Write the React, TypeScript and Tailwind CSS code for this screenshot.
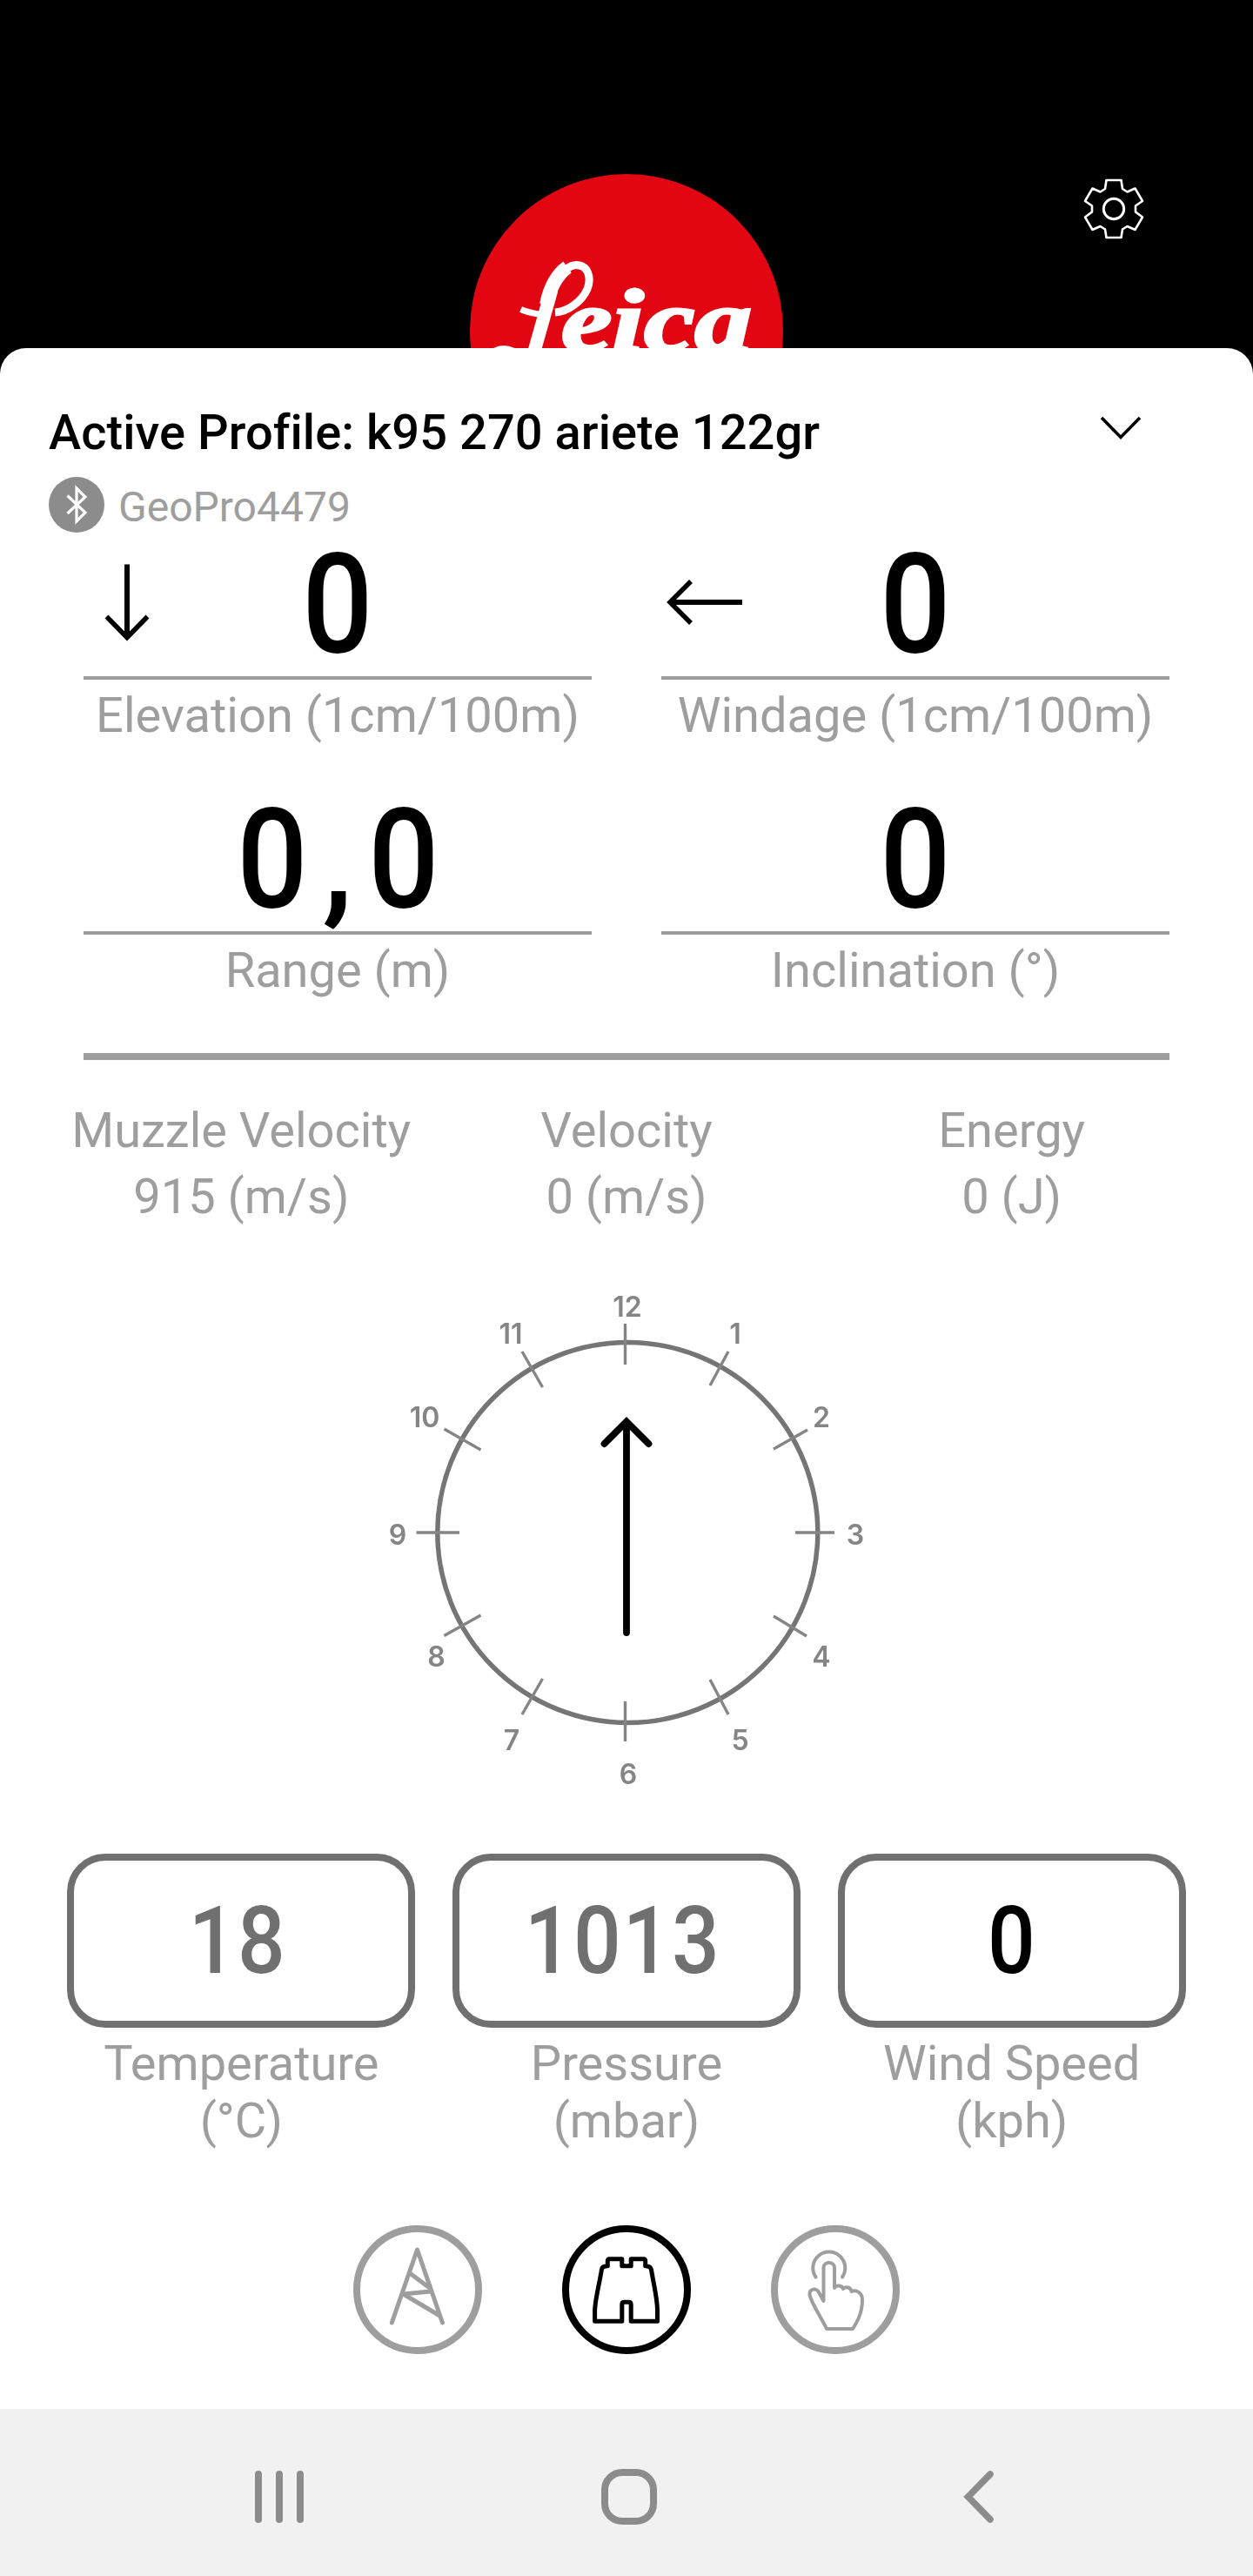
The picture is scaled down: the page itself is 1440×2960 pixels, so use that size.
import type { ReactNode } from 'react';

function LeicaLogo() {
  return (
    <svg className="h-[230px] w-[360px]" viewBox="0 0 360 230">
      <circle cx="180" cy="180" r="180" fill="#e20612" />
      <g fill="none" stroke="#fff" strokeLinecap="butt">
        <path d="M90 154 C94 130 107 105 122 104.500 C136 104.500 140 119 135 132 C129 146 113 158 98 159" strokeWidth="9" />
        <path d="M88 150 C92 130 101 115 112 107" strokeWidth="16" />
        <path d="M58.500 155.500 C66 159 76 161 88 162" strokeWidth="7" />
        <path d="M28 203 C36 198.500 46 199 58 207" strokeWidth="6" />
      </g>
      <g fill="#fff">
        <text transform="translate(58 226) skewX(-7) scale(0.82 1)" fontFamily="Liberation Sans, sans-serif" fontWeight="700" fontStyle="italic" fontSize="132">
          L
        </text>
        <text
          transform="translate(105 203)"
          fontFamily="Liberation Serif, serif"
          fontWeight="700"
          fontStyle="italic"
          fontSize="102"
          textLength="219"
          lengthAdjust="spacingAndGlyphs"
          stroke="#fff"
          strokeWidth="3"
        >
          eica
        </text>
      </g>
    </svg>
  );
}

function GearIcon() {
  return (
    <svg className="size-[72px]" viewBox="0 0 72 72" fill="none" stroke="#fff" strokeWidth="2.6" strokeLinejoin="round">
      <path d="M27.500 3 H44.500 L46 13 L51.500 16.500 L60.500 12.500 L69 27 L61 32.500 V39.500 L69 45.500 L60.500 60 L51.500 56 L46 59.500 L44.500 69 H27.500 L26 59.500 L20.500 56 L11.500 60 L3 45.500 L11 39.500 V32.500 L3 27 L11.500 12.500 L20.500 16.500 L26 13 Z" />
      <circle cx="36" cy="36" r="11.700" strokeWidth="3" />
    </svg>
  );
}

function BluetoothIcon() {
  return (
    <svg className="size-16 shrink-0" viewBox="0 0 64 64">
      <circle cx="32" cy="32" r="32" fill="#8c8c8c" />
      <path d="M21.500 21.500 L42 41 L32 51 V13 L42 23 L21.500 42" fill="none" stroke="#fff" strokeWidth="3.2" />
    </svg>
  );
}

function DownArrow() {
  return (
    <svg className="size-[100px]" viewBox="0 0 100 100" fill="none" stroke="#000" strokeWidth="6">
      <path d="M50 6.500 V90" />
      <path d="M26.500 66.500 L50 90.500 L73.500 66.500" strokeWidth="5.500" />
    </svg>
  );
}

function LeftArrow() {
  return (
    <svg className="size-[100px]" viewBox="0 0 100 100" fill="none" stroke="#000" strokeWidth="6">
      <path d="M93 50 H10" />
      <path d="M34 26 L10 50 L34 74" strokeWidth="5.500" />
    </svg>
  );
}

function BigValue({ text }: { text: string }) {
  return (
    <div className="flex text-[159px] leading-[166px] font-medium text-black">
      {text.split('').map((c, i) => (
        <span key={i} className={c === ',' ? 'flex w-[51px] justify-center' : 'flex w-[100px] scale-x-[0.9] justify-center'}>
          {c}
        </span>
      ))}
    </div>
  );
}

function Metric({ value, label, icon }: { value: string; label: string; icon?: ReactNode }) {
  return (
    <div className="flex flex-col">
      <div className="grid h-[165px] grid-cols-[1fr_auto_1fr]">
        <div className="pt-[30px]">{icon}</div>
        <BigValue text={value} />
      </div>
      <div className="h-1 bg-[#9e9e9e]" />
      <div className="mt-2 text-center text-[56px] leading-[66px] whitespace-nowrap">{label}</div>
    </div>
  );
}

function Stat({ label, value }: { label: string; value: string }) {
  return (
    <div className="flex flex-col gap-[10px] text-center text-[56px] leading-[66px] whitespace-nowrap">
      <div>{label}</div>
      <div>{value}</div>
    </div>
  );
}

const ticks = [
  'M278.500 41 V88',
  'M397 73 L376 112',
  'M488 163 L449 185',
  'M474 281 H519',
  'M449 377 L487 400',
  'M376 450 L397 490',
  'M278.500 475 V521',
  'M183.500 449 L160 490',
  'M112.500 376 L70.500 399.500',
  'M38.500 281 H88',
  'M70.500 162 L112.500 186',
  'M160 73 L183.500 114',
];

const hours: [string, number, number][] = [
  ['12', 281, 33],
  ['1', 405, 64],
  ['2', 504, 160],
  ['3', 543, 295],
  ['4', 504, 434.5],
  ['5', 410.5, 530.5],
  ['6', 282, 570],
  ['7', 148, 530.5],
  ['8', 61.5, 435],
  ['9', 17, 295],
  ['10', 48, 160],
  ['11', 147, 64],
];

function WindClock() {
  return (
    <svg className="h-[580px] w-[560px] blur-[0.7px]" viewBox="0 0 560 580">
      <g fill="none" stroke="#858585" strokeWidth="3.400">
        <circle cx="281.300" cy="281" r="218.500" stroke="#757575" strokeWidth="5.500" />
        {ticks.map((d) => (
          <path key={d} d={d} />
        ))}
      </g>
      <g fill="#858585" fontFamily="Inter, sans-serif" fontSize="32" fontWeight="600" textAnchor="middle">
        {hours.map(([t, x, y]) => (
          <text key={t} x={x} y={y}>
            {t}
          </text>
        ))}
      </g>
      <path d="M280 154 V396 M254.500 179 L280 153.500 L305.500 179" fill="none" stroke="#000" strokeWidth="7.800" strokeLinecap="round" />
    </svg>
  );
}

function InputBox({ value, label, unit, active }: { value: string; label: string; unit: string; active?: boolean }) {
  return (
    <div className="flex flex-col items-center">
      <div className="flex h-[200px] w-[400px] justify-center rounded-[44px] border-8 border-[#707070]">
        <div className={active ? 'flex text-[107px] leading-[186px] font-medium text-black' : 'flex text-[107px] leading-[186px] font-medium text-[#707070]'}>
          {value.split('').map((c, i) => (
            <span key={i} className={c === '1' ? 'flex w-[46px] scale-x-[0.9] justify-center' : 'flex w-[67px] scale-x-[0.9] justify-center'}>
              {c}
            </span>
          ))}
        </div>
      </div>
      <div className="mt-2 text-center text-[56px] leading-[66px]">
        {label}
        <br />
        {unit}
      </div>
    </div>
  );
}

function ModeButton({ active, children }: { active?: boolean; children: ReactNode }) {
  return (
    <button className={active ? 'size-[148px] text-black' : 'size-[148px] text-[#9e9e9e]'}>
      <svg className="size-full" viewBox="0 0 148 148" fill="none" stroke="currentColor" strokeWidth="5" strokeLinecap="round" strokeLinejoin="round">
        <circle cx="74" cy="74" r="70" strokeWidth="8" />
        {children}
      </svg>
    </button>
  );
}

export default function App() {
  return (
    <div className="h-[2960px] w-[1440px] overflow-hidden bg-black font-['Roboto',sans-serif] text-[#9e9e9e]">
      <header className="grid h-[400px] grid-cols-[540px_360px_1fr] overflow-hidden">
        <div />
        <div className="pt-[200px]">
          <LeicaLogo />
        </div>
        <div className="pt-[204px] pl-[344px]">
          <GearIcon />
        </div>
      </header>

      <main className="flex h-[2368px] flex-col rounded-t-[30px] bg-white pt-16">
        <div className="flex h-[66px] items-start justify-between pr-[128px] pl-14">
          <h1 className="text-[56px] leading-[66px] font-medium tracking-[0.05px] whitespace-nowrap text-black">Active Profile: k95 270 ariete 122gr</h1>
          <svg className="mt-[13px] h-8 w-12" viewBox="0 0 48 32" fill="none" stroke="#000" strokeWidth="3.600">
            <path d="M2 3 L24 25.500 L46 3" />
          </svg>
        </div>
        <div className="mt-[18px] flex h-16 items-center gap-4 pl-14">
          <BluetoothIcon />
          <span className="pt-[5px] text-[48px] leading-[56px]">GeoPro4479</span>
        </div>

        <section className="mx-24 grid grid-cols-2 gap-x-20 gap-y-[50px]">
          <Metric value="0" label="Elevation (1cm/100m)" icon={<DownArrow />} />
          <Metric value="0" label="Windage (1cm/100m)" icon={<LeftArrow />} />
          <Metric value="0,0" label="Range (m)" />
          <Metric value="0" label="Inclination (°)" />
        </section>

        <div className="mx-24 mt-[62px] h-2 shrink-0 bg-[#9e9e9e]" />

        <section className="mx-14 mt-12 grid grid-cols-3">
          <Stat label="Muzzle Velocity" value="915 (m/s)" />
          <Stat label="Velocity" value="0 (m/s)" />
          <Stat label="Energy" value="0 (J)" />
        </section>

        <div className="mt-[72px] flex justify-center">
          <WindClock />
        </div>

        <section className="mx-14 mt-[70px] grid grid-cols-3">
          <InputBox value="18" label="Temperature" unit="(°C)" />
          <InputBox value="1013" label="Pressure" unit="(mbar)" />
          <InputBox value="0" label="Wind Speed" unit="(kph)" active />
        </section>

        <div className="mt-[87px] flex justify-center gap-[92px]">
          <ModeButton>
            <path d="M44.300 112 L73.500 28 L102.500 112 M65 55 L89 73 M89 76 L57.500 79 L99.500 104" />
          </ModeButton>
          <ModeButton active>
            <path
              d="M37.600 110.300 V98 C38 84 43 67 45.400 51 Q46 46.700 52.300 46.700 V41 Q52.300 38.700 54.500 38.700 H68.800 V46.700 H79.200 V38.700 H93.500 Q95.700 38.700 95.700 41 V46.700 Q101.500 46.700 102.500 51 C105 67 109.500 84 109.500 98 V110.300 H79.200 V91 Q79.200 88.300 76.500 88.300 H71.500 Q68.800 88.300 68.800 91 V110.300 Z"
            />
          </ModeButton>
          <ModeButton>
            <path
              strokeWidth="4"
              d="M51.500 59.500 A18.500 18.500 0 1 1 82 59.500 M60.500 87 V49 C60.500 41 73 41 73 49 V72 C75 68 82 69 83 73 C85 70 92 71 92.500 76 C98 74 105 77 105 86 C105 101 99 111 94 119 H64 C58 106 47 91 44.500 80 C44 72 53 72 55 77 Z"
            />
          </ModeButton>
        </div>
      </main>

      <nav className="flex h-[192px] bg-[#f1f1f1] pt-[69px] pl-[120px]">
        <div className="flex h-16 w-[402px] items-center justify-center gap-4">
          <div className="h-[60px] w-2 rounded-full bg-[#8c8c8c]" />
          <div className="h-[60px] w-2 rounded-full bg-[#8c8c8c]" />
          <div className="h-[60px] w-2 rounded-full bg-[#8c8c8c]" />
        </div>
        <div className="flex h-16 w-[402px] justify-center">
          <div className="size-16 rounded-[24px] border-8 border-[#8c8c8c]" />
        </div>
        <div className="flex h-16 w-[402px] justify-center">
          <svg className="h-16 w-10" viewBox="0 0 40 64" fill="none" stroke="#8c8c8c" strokeWidth="7.500" strokeLinecap="round">
            <path d="M33 6 L7.500 32 L33 58" />
          </svg>
        </div>
      </nav>
    </div>
  );
}
